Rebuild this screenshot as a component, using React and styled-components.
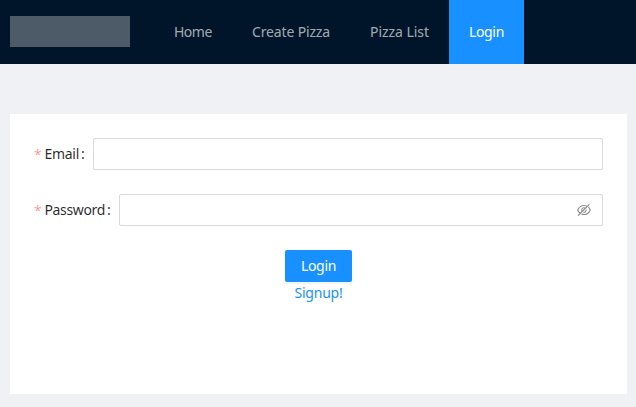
import React from "react";
import styled, { createGlobalStyle } from "styled-components";
import { AiOutlineEyeInvisible } from "react-icons/ai";

const GlobalStyle = createGlobalStyle`
  * { box-sizing: border-box; }
  body {
    margin: 0;
    background: #eff1f5;
    font-family: "Noto Sans", sans-serif;
    font-size: 14px;
    line-height: 22px;
    color: rgba(0, 0, 0, 0.85);
  }
`;

const Layout = styled.div`
  min-height: 407px;
  display: flex;
  flex-direction: column;
`;

const Header = styled.header`
  height: 64px;
  padding-left: 10px;
  display: flex;
  background: #001529;
`;

const Logo = styled.div`
  width: 120px;
  height: 31px;
  margin: 16px 24px 0 0;
  background: #4d5b69;
`;

const Menu = styled.nav`
  display: flex;
`;

const MenuItem = styled.a`
  width: ${(p) => p.$width}px;
  padding-left: 20px;
  line-height: 64px;
  white-space: nowrap;
  letter-spacing: ${(p) => p.$spacing || 0}px;
  color: ${(p) => (p.$active ? "#fff" : "rgba(255, 255, 255, 0.65)")};
  background: ${(p) => (p.$active ? "#1890ff" : "transparent")};
`;

const Card = styled.main`
  height: 280px;
  margin: 50px 9px 0 10px;
  padding: 24px;
  background: #fff;
`;

const Form = styled.form`
  display: flex;
  flex-direction: column;
`;

const Field = styled.div`
  display: flex;
  height: 32px;
  margin-bottom: 24px;
`;

const Label = styled.label`
  display: flex;
  align-items: center;
  width: ${(p) => p.$width}px;
  white-space: nowrap;
`;

const Required = styled.span`
  width: 10.5px;
  padding-top: 1px;
  color: #ff7875;
  font-weight: 300;
`;

const LabelText = styled.span`
  letter-spacing: ${(p) => p.$spacing}px;
`;

const Colon = styled.span`
  margin-left: 2px;
`;

const InputBox = styled.div`
  flex: 1;
  display: flex;
  align-items: center;
  padding: 0 10px;
  border: 1px solid #d9d9d9;
  border-radius: 2px;
  background: #fff;

  svg {
    color: rgba(0, 0, 0, 0.45);
  }
`;

const Input = styled.input`
  flex: 1;
  min-width: 0;
  padding: 0;
  border: 0;
  outline: 0;
  font: inherit;
`;

const Actions = styled.div`
  display: flex;
  flex-direction: column;
  align-items: center;
`;

const Submit = styled.button`
  width: 67px;
  height: 32px;
  padding: 0;
  border: 0;
  border-radius: 2px;
  background: #1890ff;
  box-shadow: 0 2px 0 rgba(0, 0, 0, 0.045);
  color: #fff;
  font: inherit;
  letter-spacing: -0.3px;
`;

const SignupLink = styled.a`
  color: #1890ff;
  letter-spacing: -0.2px;
`;

const menu = [
  { text: "Home", width: 78, spacing: -0.5 },
  { text: "Create Pizza", width: 118, spacing: -0.15 },
  { text: "Pizza List", width: 99, spacing: -0.05 },
  { text: "Login", width: 75, spacing: -0.35, active: true },
];

export default function App() {
  return (
    <Layout>
      <GlobalStyle />
      <Header>
        <Logo />
        <Menu>
          {menu.map((m) => (
            <MenuItem key={m.text} $width={m.width} $spacing={m.spacing} $active={m.active}>
              {m.text}
            </MenuItem>
          ))}
        </Menu>
      </Header>
      <Card>
        <Form>
          <Field>
            <Label htmlFor="email" $width={59}>
              <Required>*</Required>
              <LabelText $spacing={-0.3}>Email</LabelText>
              <Colon>:</Colon>
            </Label>
            <InputBox>
              <Input id="email" />
            </InputBox>
          </Field>
          <Field>
            <Label htmlFor="password" $width={85}>
              <Required>*</Required>
              <LabelText $spacing={-0.35}>Password</LabelText>
              <Colon>:</Colon>
            </Label>
            <InputBox>
              <Input id="password" type="password" />
              <AiOutlineEyeInvisible size={16} />
            </InputBox>
          </Field>
          <Actions>
            <Submit type="button">Login</Submit>
            <SignupLink>Signup!</SignupLink>
          </Actions>
        </Form>
      </Card>
    </Layout>
  );
}
